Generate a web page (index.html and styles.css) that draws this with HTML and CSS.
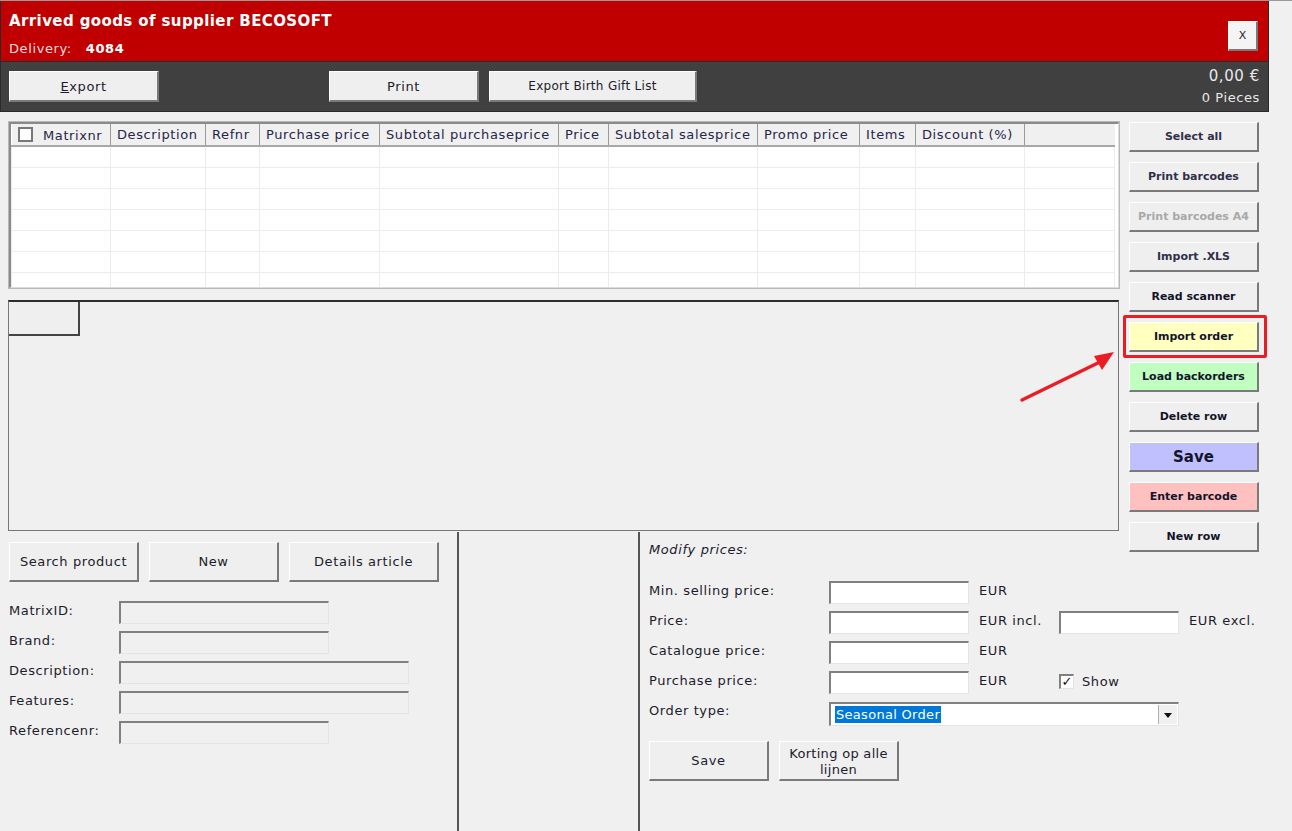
FILE: index.html
```html
<!DOCTYPE html>
<html lang="en">

<head>
    <meta charset="UTF-8">
    <title>Arrived goods of supplier BECOSOFT</title>
    <link rel="stylesheet" href="styles.css">
</head>

<body>
    <div class="window">
        <header class="titlebar">
            <div class="title-text">
                <h1>Arrived goods of supplier BECOSOFT</h1>
                <div class="delivery"><span>Delivery:</span><b>4084</b></div>
            </div>
            <button class="btn close-btn">X</button>
        </header>

        <div class="toolbar">
            <button class="btn tb-btn"><u>E</u>xport</button>
            <button class="btn tb-btn print-btn">Print</button>
            <button class="btn tb-btn gift-btn">Export Birth Gift List</button>
            <div class="totals">
                <div class="amount">0,00 €</div>
                <div class="pieces">0 Pieces</div>
            </div>
        </div>

        <div class="main">
            <div class="work">
                <div class="grid-box">
                    <table class="grid">
                        <colgroup>
                            <col style="width:99px">
                            <col style="width:95px">
                            <col style="width:54px">
                            <col style="width:120px">
                            <col style="width:179px">
                            <col style="width:50px">
                            <col style="width:149px">
                            <col style="width:102px">
                            <col style="width:56px">
                            <col style="width:109px">
                            <col>
                        </colgroup>
                        <thead>
                            <tr>
                                <th class="first"><span class="chk"></span>Matrixnr</th>
                                <th>Description</th>
                                <th>Refnr</th>
                                <th>Purchase price</th>
                                <th>Subtotal purchaseprice</th>
                                <th>Price</th>
                                <th>Subtotal salesprice</th>
                                <th>Promo price</th>
                                <th>Items</th>
                                <th>Discount (%)</th>
                                <th class="blank"></th>
                            </tr>
                        </thead>
                        <tbody>
                            <tr><td></td><td></td><td></td><td></td><td></td><td></td><td></td><td></td><td></td><td></td><td></td></tr>
                            <tr><td></td><td></td><td></td><td></td><td></td><td></td><td></td><td></td><td></td><td></td><td></td></tr>
                            <tr><td></td><td></td><td></td><td></td><td></td><td></td><td></td><td></td><td></td><td></td><td></td></tr>
                            <tr><td></td><td></td><td></td><td></td><td></td><td></td><td></td><td></td><td></td><td></td><td></td></tr>
                            <tr><td></td><td></td><td></td><td></td><td></td><td></td><td></td><td></td><td></td><td></td><td></td></tr>
                            <tr><td></td><td></td><td></td><td></td><td></td><td></td><td></td><td></td><td></td><td></td><td></td></tr>
                            <tr><td></td><td></td><td></td><td></td><td></td><td></td><td></td><td></td><td></td><td></td><td></td></tr>
                        </tbody>
                    </table>
                </div>
                <div class="tab-panel">
                    <div class="tab"></div>
                </div>
            </div>

            <div class="side">
                <button class="btn side-btn">Select all</button>
                <button class="btn side-btn">Print barcodes</button>
                <button class="btn side-btn disabled">Print barcodes A4</button>
                <button class="btn side-btn">Import .XLS</button>
                <button class="btn side-btn strong">Read scanner</button>
                <div class="highlight">
                    <button class="btn side-btn strong yellow">Import order</button>
                </div>
                <button class="btn side-btn strong green">Load backorders</button>
                <button class="btn side-btn strong">Delete row</button>
                <button class="btn side-btn strong blue big">Save</button>
                <button class="btn side-btn strong pink">Enter barcode</button>
                <button class="btn side-btn strong">New row</button>
            </div>
        </div>

        <div class="bottom">
            <div class="article">
                <div class="article-actions">
                    <button class="btn big-btn">Search product</button>
                    <button class="btn big-btn">New</button>
                    <button class="btn big-btn wide">Details article</button>
                </div>
                <div class="form">
                    <div class="row"><label>MatrixID:</label><span class="field ro"></span></div>
                    <div class="row"><label>Brand:</label><span class="field ro"></span></div>
                    <div class="row"><label>Description:</label><span class="field ro long"></span></div>
                    <div class="row"><label>Features:</label><span class="field ro long"></span></div>
                    <div class="row"><label>Referencenr:</label><span class="field ro"></span></div>
                </div>
            </div>

            <div class="spacer-col"></div>

            <div class="prices">
                <div class="prices-title">Modify prices:</div>
                <div class="price-rows">
                    <div class="prow"><label>Min. selling price:</label><span class="field"></span><span class="unit">EUR</span></div>
                    <div class="prow"><label>Price:</label><span class="field"></span><span class="unit">EUR incl.</span><span class="field short"></span><span class="unit">EUR excl.</span></div>
                    <div class="prow"><label>Catalogue price:</label><span class="field"></span><span class="unit">EUR</span></div>
                    <div class="prow"><label>Purchase price:</label><span class="field"></span><span class="unit">EUR</span><span class="check-wrap"><span class="chk checked">✓</span>Show</span></div>
                    <div class="prow"><label>Order type:</label>
                        <span class="select"><span class="sel-text">Seasonal Order</span><span class="sel-arrow"></span></span>
                    </div>
                </div>
                <div class="price-actions">
                    <button class="btn big-btn small">Save</button>
                    <button class="btn big-btn small two-line">Korting op alle<br>lijnen</button>
                </div>
            </div>
        </div>
    </div>

    <svg class="arrow" width="110" height="60" viewBox="0 0 110 60">
        <line x1="4" y1="52" x2="86" y2="12" stroke="#ec1c24" stroke-width="3.5" stroke-linecap="round" />
        <polygon points="96,4 76,8 84,22" fill="#ec1c24" />
    </svg>
</body>

</html>
```

FILE: styles.css
```css
body {
    margin: 0;
    background-color: #f0f0f0;
    font-family: "DejaVu Sans", Verdana, sans-serif;
    font-size: 13px;
    letter-spacing: 0.6px;
    color: #1c1c2c;
    border-top: 1px solid #9a9a9a;
    height: 830px;
    overflow: hidden;
}

.window {
    width: 1269px;
}

.btn {
    font-family: inherit;
    font-size: 13px;
    letter-spacing: inherit;
    color: #1c1c2c;
    background: #efefef;
    border-style: solid;
    border-width: 1px 2px 2px 1px;
    border-color: #ffffff #7a7a7a #7a7a7a #ffffff;
    padding: 0;
    cursor: pointer;
    box-sizing: border-box;
}

/* title bar */
.titlebar {
    height: 60px;
    background: #c00000;
    border: 1px solid #2a2a2a;
    border-top: none;
    display: flex;
    justify-content: space-between;
    align-items: flex-start;
    color: #fff;
}

.title-text {
    padding: 11px 0 0 8px;
}

.title-text h1 {
    margin: 0;
    font-size: 15px;
    font-weight: bold;
    letter-spacing: 0.4px;
}

.delivery {
    margin-top: 11px;
    font-size: 13px;
    color: #f2dede;
}

.delivery b {
    margin-left: 14px;
    color: #fff;
}

.close-btn {
    width: 30px;
    height: 30px;
    margin: 20px 10px 0 0;
    font-size: 11px;
    letter-spacing: 0;
    background: #f4f4f4;
}

/* toolbar */
.toolbar {
    height: 49px;
    background: #404040;
    border: 1px solid #2a2a2a;
    border-top: none;
    display: flex;
    align-items: flex-start;
    padding: 0 8px;
}

.tb-btn {
    width: 150px;
    height: 31px;
    margin-top: 9px;
}

.print-btn {
    margin-left: 170px;
}

.gift-btn {
    width: 208px;
    margin-left: 10px;
    font-size: 12px;
    letter-spacing: 0.3px;
}

.totals {
    margin-left: auto;
    text-align: right;
    color: #e8e8e8;
    padding-top: 5px;
}

.amount {
    font-size: 15px;
}

.pieces {
    margin-top: 5px;
    font-size: 13px;
}

/* main area */
.main {
    display: flex;
    align-items: flex-start;
    height: 410px;
    padding-top: 10px;
}

.work {
    width: 1111px;
    margin-left: 8px;
}

.grid-box {
    height: 163px;
    margin-left: 1px;
    border-style: solid;
    border-width: 2px 1px 1px 2px;
    border-color: #8a8a8a #dcdcdc #dcdcdc #8a8a8a;
    background: #fff;
    overflow: hidden;
    outline: 1px solid #b8b8b8;
}

.grid {
    width: 1104px;
    border-collapse: collapse;
    table-layout: fixed;
}

.grid th {
    height: 21px;
    padding: 0 0 0 6px;
    background: #f0f0f0;
    font-weight: normal;
    text-align: left;
    white-space: nowrap;
    overflow: hidden;
    border-left: 1px solid #ffffff;
    border-right: 1px solid #9a9a9a;
    border-bottom: 2px solid #a8a8a8;
    color: #26264a;
}

.grid th.blank {
    border-right: none;
}

.grid .chk {
    display: inline-block;
    width: 11px;
    height: 11px;
    border: 2px solid #777;
    background: #fff;
    vertical-align: -2px;
    margin-right: 10px;
}

.grid td {
    height: 20px;
    border: 1px solid #ececec;
    padding: 0;
}

.tab-panel {
    height: 228px;
    margin-top: 12px;
    border-top: 2px solid #2e2e2e;
    border-left: 1px solid #777;
    border-right: 1px solid #777;
    border-bottom: 1px solid #777;
}

.tab {
    width: 69px;
    height: 32px;
    border-right: 2px solid #444;
    border-bottom: 2px solid #444;
    background: #efefef;
}

.side {
    margin-left: 10px;
    display: flex;
    flex-direction: column;
    gap: 10px;
    position: relative;
    z-index: 1;
}

.side-btn {
    width: 130px;
    height: 30px;
    font-size: 11px;
    font-weight: bold;
    letter-spacing: 0;
    color: #30304a;
}

.side-btn.strong {
    color: #14142a;
}

.side-btn.disabled {
    color: #a8a8a8;
}

.side-btn.yellow {
    background: #ffffc0;
}

.side-btn.green {
    background: #c0ffc0;
}

.side-btn.blue {
    background: #c0c0ff;
}

.side-btn.pink {
    background: #ffc0c0;
}

.side-btn.big {
    font-size: 15px;
}

.highlight {
    position: relative;
}

.highlight::after {
    content: "";
    position: absolute;
    left: -6px;
    top: -7px;
    width: 138px;
    height: 37px;
    border: 3px solid #ec1c24;
    border-radius: 2px;
}

/* bottom */
.bottom {
    display: flex;
    height: 300px;
}

.article {
    width: 457px;
    border-right: 2px solid #555;
}

.article-actions {
    display: flex;
    gap: 10px;
    padding: 10px 0 0 9px;
}

.big-btn {
    width: 130px;
    height: 40px;
}

.big-btn.wide {
    width: 150px;
}

.form {
    margin-top: 19px;
    padding-left: 9px;
    display: flex;
    flex-direction: column;
    gap: 7px;
}

.row {
    display: flex;
    align-items: center;
    height: 23px;
}

.row label {
    width: 110px;
    margin-top: -5px;
}

.field {
    display: inline-block;
    box-sizing: border-box;
    width: 140px;
    height: 23px;
    background: #fff;
    border-style: solid;
    border-width: 2px 1px 1px 2px;
    border-color: #808080 #e4e4e4 #e4e4e4 #808080;
}

.field.ro {
    width: 210px;
    background: #f0f0f0;
}

.field.ro.long {
    width: 290px;
}

.spacer-col {
    width: 179px;
    border-right: 2px solid #555;
}

.prices {
    flex: 1;
    padding-left: 9px;
}

.prices-title {
    font-style: italic;
    margin-top: 10px;
    height: 39px;
}

.price-rows {
    display: flex;
    flex-direction: column;
    gap: 7px;
}

.prow {
    display: flex;
    align-items: center;
    height: 23px;
}

.prow label {
    width: 180px;
    margin-top: -4px;
}

.unit {
    width: 80px;
    padding-left: 10px;
    margin-top: -5px;
}

.field.short {
    width: 120px;
}

.check-wrap {
    display: flex;
    align-items: center;
    gap: 8px;
    margin-top: -2px;
}

.check-wrap .chk {
    display: inline-block;
    width: 15px;
    height: 15px;
    box-sizing: border-box;
    border-style: solid;
    border-width: 2px 1px 1px 2px;
    border-color: #808080 #e4e4e4 #e4e4e4 #808080;
    background: #fff;
    font-size: 13px;
    letter-spacing: 0;
    line-height: 12px;
    text-align: center;
    font-weight: bold;
    color: #111;
}

.select {
    display: flex;
    align-items: center;
    box-sizing: border-box;
    width: 350px;
    height: 24px;
    background: #fff;
    border-style: solid;
    border-width: 2px 1px 1px 2px;
    border-color: #808080 #e4e4e4 #e4e4e4 #808080;
    padding-left: 4px;
    margin-top: 3px;
}

.sel-text {
    background: #0078d7;
    color: #fff;
    line-height: 17px;
    padding: 0 1px;
    letter-spacing: 0.3px;
}

.sel-arrow {
    margin-left: auto;
    width: 18px;
    height: 19px;
    margin-right: 1px;
    background: #f0f0f0;
    border-left: 1px solid #b0b0b0;
    position: relative;
}

.sel-arrow::after {
    content: "";
    position: absolute;
    left: 5px;
    top: 8px;
    border-left: 4px solid transparent;
    border-right: 4px solid transparent;
    border-top: 5px solid #111;
}

.price-actions {
    display: flex;
    gap: 10px;
    margin-top: 17px;
}

.big-btn.small {
    width: 120px;
}

.two-line {
    line-height: 16px;
    padding-top: 3px;
    letter-spacing: 0.3px;
}

.arrow {
    position: absolute;
    left: 1018px;
    top: 348px;
}
```
